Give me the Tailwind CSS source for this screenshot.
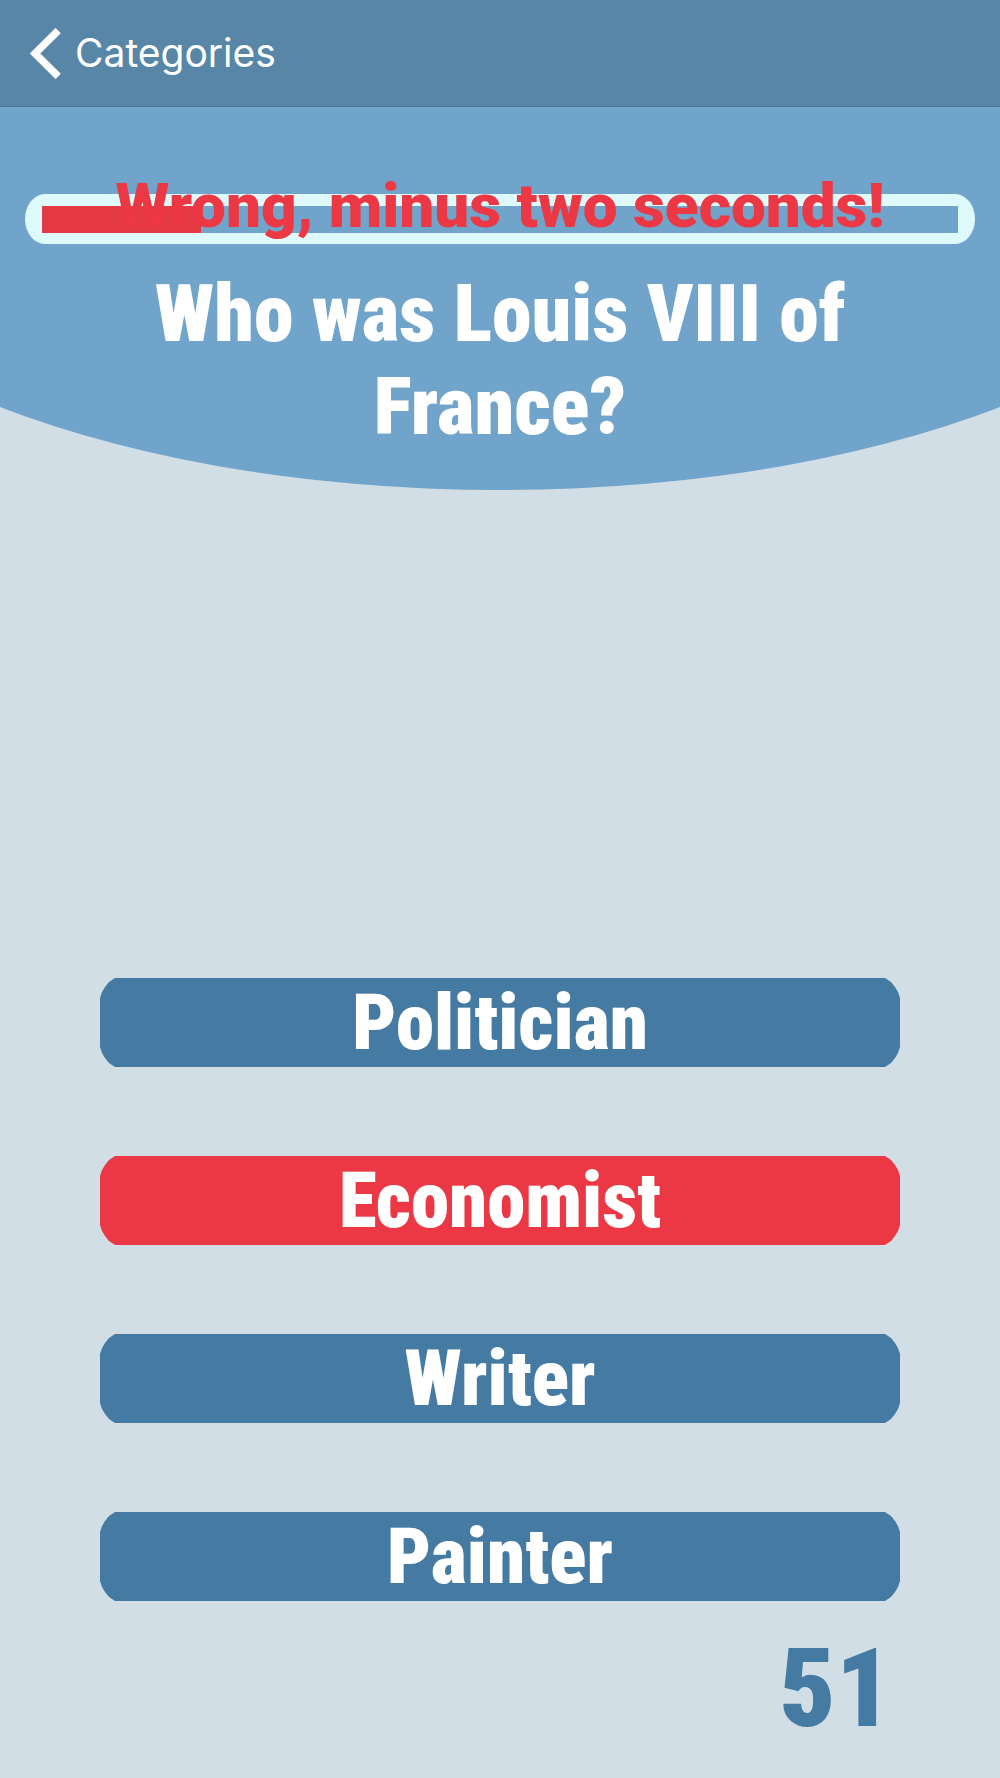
<!DOCTYPE html>
<html lang="en">

<head>
  <meta charset="UTF-8" />
  <meta name="viewport" content="width=device-width, initial-scale=1.0" />
  <title>Quiz</title>

  <script src="https://cdn.jsdelivr.net/npm/@tailwindcss/browser@4"></script>
</head>

<body class="bg-[#d2dee6] min-h-screen font-['Roboto_Condensed','Roboto',sans-serif] font-black">
  <header class="h-[107px] bg-[#5886a7] border-b border-[#4d7a9b] flex items-center px-[30px]">
    <a href="#categories" class="flex items-center gap-[14px] text-white text-[39px] leading-[52px] font-normal font-['Inter',sans-serif]">
      <svg xmlns="http://www.w3.org/2000/svg" fill="none" viewBox="0 0 31 51" stroke="currentColor" class="w-[31px] h-[51px]">
        <path stroke-width="7.4" d="M28.2 2.5L5 25.5L28.2 48.5" />
      </svg>
      Categories
    </a>
  </header>

  <!-- Question -->
  <section class="h-[383px] px-[25px] pt-[87px] bg-[#71a4ca] [clip-path:ellipse(75%_326px_at_50%_57px)]">
    <div class="relative">
      <!-- Timer -->
      <div id="timer" class="h-[50px] bg-[#dffafb] rounded-[20px_/_25px] px-[17px] pt-3 pb-[11px]">
        <div class="h-full bg-[#71a4ca]">
          <div id="timer-fill" class="h-full bg-[#e53943]" style="width: 17.4%"></div>
        </div>
      </div>
      <p id="message" class="absolute inset-x-0 -top-[26px] text-center text-[#eb3844] text-[62px] leading-[76px] whitespace-nowrap font-['Roboto',sans-serif]">
        Wrong, minus two seconds!
      </p>
    </div>
    <h1 class="mt-6 mx-auto max-w-[760px] text-center text-white text-[80px] leading-[93px]">
      Who was Louis VIII of France?
    </h1>
  </section>

  <!-- Answers -->
  <main class="mt-[488px] mx-[10%] flex flex-col gap-[89px] text-white text-[77px] leading-[90px]">
    <button type="button"
      class="h-[89px] bg-[#457ba3] cursor-pointer [clip-path:polygon(0_20px,2px_14px,5px_9px,9px_4px,15px_0,calc(100%-15px)_0,calc(100%-9px)_4px,calc(100%-5px)_9px,calc(100%-2px)_14px,100%_20px,100%_calc(100%-20px),calc(100%-2px)_calc(100%-14px),calc(100%-5px)_calc(100%-9px),calc(100%-9px)_calc(100%-4px),calc(100%-15px)_100%,15px_100%,9px_calc(100%-4px),5px_calc(100%-9px),2px_calc(100%-14px),0_calc(100%-20px))]">Politician</button>
    <button type="button"
      class="h-[89px] bg-[#eb3844] cursor-pointer [clip-path:polygon(0_20px,2px_14px,5px_9px,9px_4px,15px_0,calc(100%-15px)_0,calc(100%-9px)_4px,calc(100%-5px)_9px,calc(100%-2px)_14px,100%_20px,100%_calc(100%-20px),calc(100%-2px)_calc(100%-14px),calc(100%-5px)_calc(100%-9px),calc(100%-9px)_calc(100%-4px),calc(100%-15px)_100%,15px_100%,9px_calc(100%-4px),5px_calc(100%-9px),2px_calc(100%-14px),0_calc(100%-20px))]">Economist</button>
    <button type="button"
      class="h-[89px] bg-[#457ba3] cursor-pointer [clip-path:polygon(0_20px,2px_14px,5px_9px,9px_4px,15px_0,calc(100%-15px)_0,calc(100%-9px)_4px,calc(100%-5px)_9px,calc(100%-2px)_14px,100%_20px,100%_calc(100%-20px),calc(100%-2px)_calc(100%-14px),calc(100%-5px)_calc(100%-9px),calc(100%-9px)_calc(100%-4px),calc(100%-15px)_100%,15px_100%,9px_calc(100%-4px),5px_calc(100%-9px),2px_calc(100%-14px),0_calc(100%-20px))]">Writer</button>
    <button type="button"
      class="h-[89px] bg-[#457ba3] cursor-pointer [clip-path:polygon(0_20px,2px_14px,5px_9px,9px_4px,15px_0,calc(100%-15px)_0,calc(100%-9px)_4px,calc(100%-5px)_9px,calc(100%-2px)_14px,100%_20px,100%_calc(100%-20px),calc(100%-2px)_calc(100%-14px),calc(100%-5px)_calc(100%-9px),calc(100%-9px)_calc(100%-4px),calc(100%-15px)_100%,15px_100%,9px_calc(100%-4px),5px_calc(100%-9px),2px_calc(100%-14px),0_calc(100%-20px))]">Painter</button>
  </main>

  <p id="score" class="mt-6 px-[108px] text-right text-[#457ba3] text-[110px] leading-[128px]">51</p>
</body>

</html>
